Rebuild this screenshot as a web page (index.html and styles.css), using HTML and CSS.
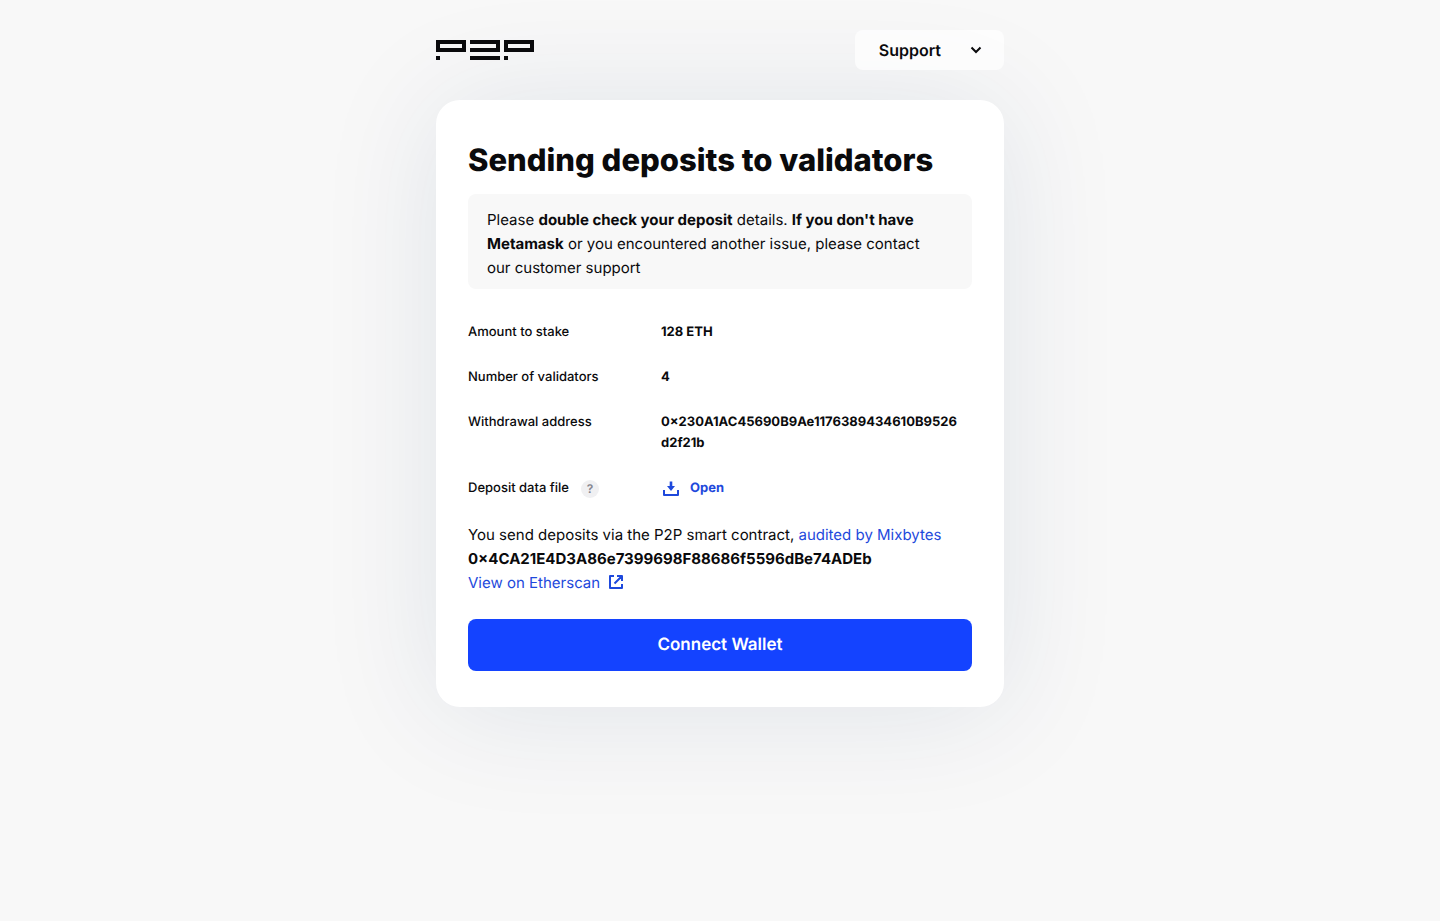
FILE: index.html
```html
<!DOCTYPE html>
<html lang="en">
<head>
    <meta charset="UTF-8">
    <meta name="viewport" content="width=device-width, initial-scale=1.0">
    <title>P2P — Sending deposits to validators</title>
    <link rel="stylesheet" href="styles.css">
</head>
<body>
    <div class="page">
        <header class="header">
            <a class="logo" href="#" aria-label="P2P">
                <svg width="98" height="20" viewBox="0 0 98 20" fill="none">
                    <path d="M2 2h26v8H2zM34 2h28v8H34M70 2h26v8H70z" stroke="#0a0a0c" stroke-width="4"/>
                    <path d="M0 16h4v4H0zM34 16h30v4H34zM68 16h4v4h-4z" fill="#0a0a0c"/>
                </svg>
            </a>
            <button class="support" type="button">
                Support
                <svg width="12" height="8" viewBox="0 0 12 8" fill="none">
                    <path d="M1.500 1.500L6 6l4.500-4.500" stroke="currentColor" stroke-width="2"/>
                </svg>
            </button>
        </header>

        <main class="card">
            <h1 class="title">Sending deposits to validators</h1>

            <p class="notice">
                Please <b>double check your deposit</b> details. <b>If you don't have Metamask</b> or you encountered another issue, please contact our customer support
            </p>

            <!-- Deposit details -->
            <dl class="details">
                <dt>Amount to stake</dt>
                <dd>128 ETH</dd>
                <dt>Number of validators</dt>
                <dd>4</dd>
                <dt>Withdrawal address</dt>
                <dd>0×230A1AC45690B9Ae1176389434610B9526d2f21b</dd>
                <dt>Deposit data file <button class="hint" type="button" aria-label="About the deposit data file">?</button></dt>
                <dd>
                    <a class="open" href="#">
                        <svg width="20" height="20" viewBox="0 0 20 20" fill="none">
                            <path d="M3 11v5h14v-5" stroke="currentColor" stroke-width="2" stroke-linejoin="round"/>
                            <path d="M8.700 2.500h2.600V7H14l-4 5-4-5h2.700z" fill="currentColor"/>
                        </svg>
                        Open
                    </a>
                </dd>
            </dl>

            <div class="contract">
                <p>You send deposits via the P2P smart contract, <a href="#">audited by Mixbytes</a></p>
                <p><b>0×4CA21E4D3A86e7399698F88686f5596dBe74ADEb</b></p>
                <p>
                    <a class="etherscan" href="#">
                        View on Etherscan
                        <svg width="16" height="16" viewBox="0 1 16 16" fill="none">
                            <path d="M6 2H2v12h12v-4M9 2h5v5M14 2L6.500 9.500" stroke="currentColor" stroke-width="2" stroke-linejoin="round"/>
                        </svg>
                    </a>
                </p>
            </div>

            <button class="connect" type="button">Connect Wallet</button>
        </main>
    </div>
</body>
</html>
```
FILE: styles.css
```css
* {
    margin: 0;
    padding: 0;
    box-sizing: border-box;
}

body {
    min-height: 100vh;
    font-family: Inter, "Liberation Sans", sans-serif;
    font-size: 15px;
    line-height: 24px;
    color: #0a0a0c;
    background: #f8f8f8;
    text-rendering: geometricPrecision;
}

a {
    color: #1e49dc;
    text-decoration: none;
}

button {
    font-family: inherit;
    text-rendering: inherit;
    border: none;
    cursor: pointer;
}

.page {
    max-width: 568px;
    margin: 0 auto;
}

.header {
    position: relative;
    z-index: 1;
    display: flex;
    align-items: center;
    justify-content: space-between;
    padding: 30px 0;
}

.logo svg {
    display: block;
}

.support {
    display: flex;
    align-items: center;
    gap: 29px;
    height: 40px;
    padding: 0 22px 0 24px;
    font-size: 16px;
    font-weight: 600;
    color: #0a0a0c;
    background: rgba(255, 255, 255, 0.7);
    border-radius: 8px;
}

.card {
    padding: 40px 32px 36px;
    background: #fff;
    border-radius: 24px;
    box-shadow: 0 4px 120px rgba(20, 50, 100, 0.1);
}

.title {
    margin-bottom: 12px;
    font-size: 31px;
    font-weight: 800;
    line-height: 42px;
}

.notice {
    margin-bottom: 33px;
    padding: 14px 48px 9px 19px;
    background: #f8f8f8;
    border-radius: 8px;
}

.details {
    display: grid;
    grid-template-columns: 193px 1fr;
    row-gap: 24px;
    margin-bottom: 24px;
    font-size: 13px;
    line-height: 21px;
}

.details dt {
    display: flex;
    align-items: center;
    align-self: start;
    gap: 12px;
    font-weight: 500;
}

.details dd {
    padding-right: 7px;
    font-weight: 700;
    word-break: break-all;
}

.hint {
    width: 18px;
    height: 18px;
    font-size: 12px;
    font-weight: 600;
    line-height: 18px;
    color: #85858f;
    background: #f0f0f2;
    border-radius: 50%;
}

.open {
    display: flex;
    align-items: center;
    gap: 9px;
    height: 21px;
}

.contract {
    margin-bottom: 24px;
}

.etherscan {
    display: flex;
    align-items: center;
    gap: 8px;
}

.connect {
    width: 100%;
    height: 52px;
    font-size: 17px;
    font-weight: 600;
    color: #fff;
    background: #1443ff;
    border-radius: 8px;
}
```
